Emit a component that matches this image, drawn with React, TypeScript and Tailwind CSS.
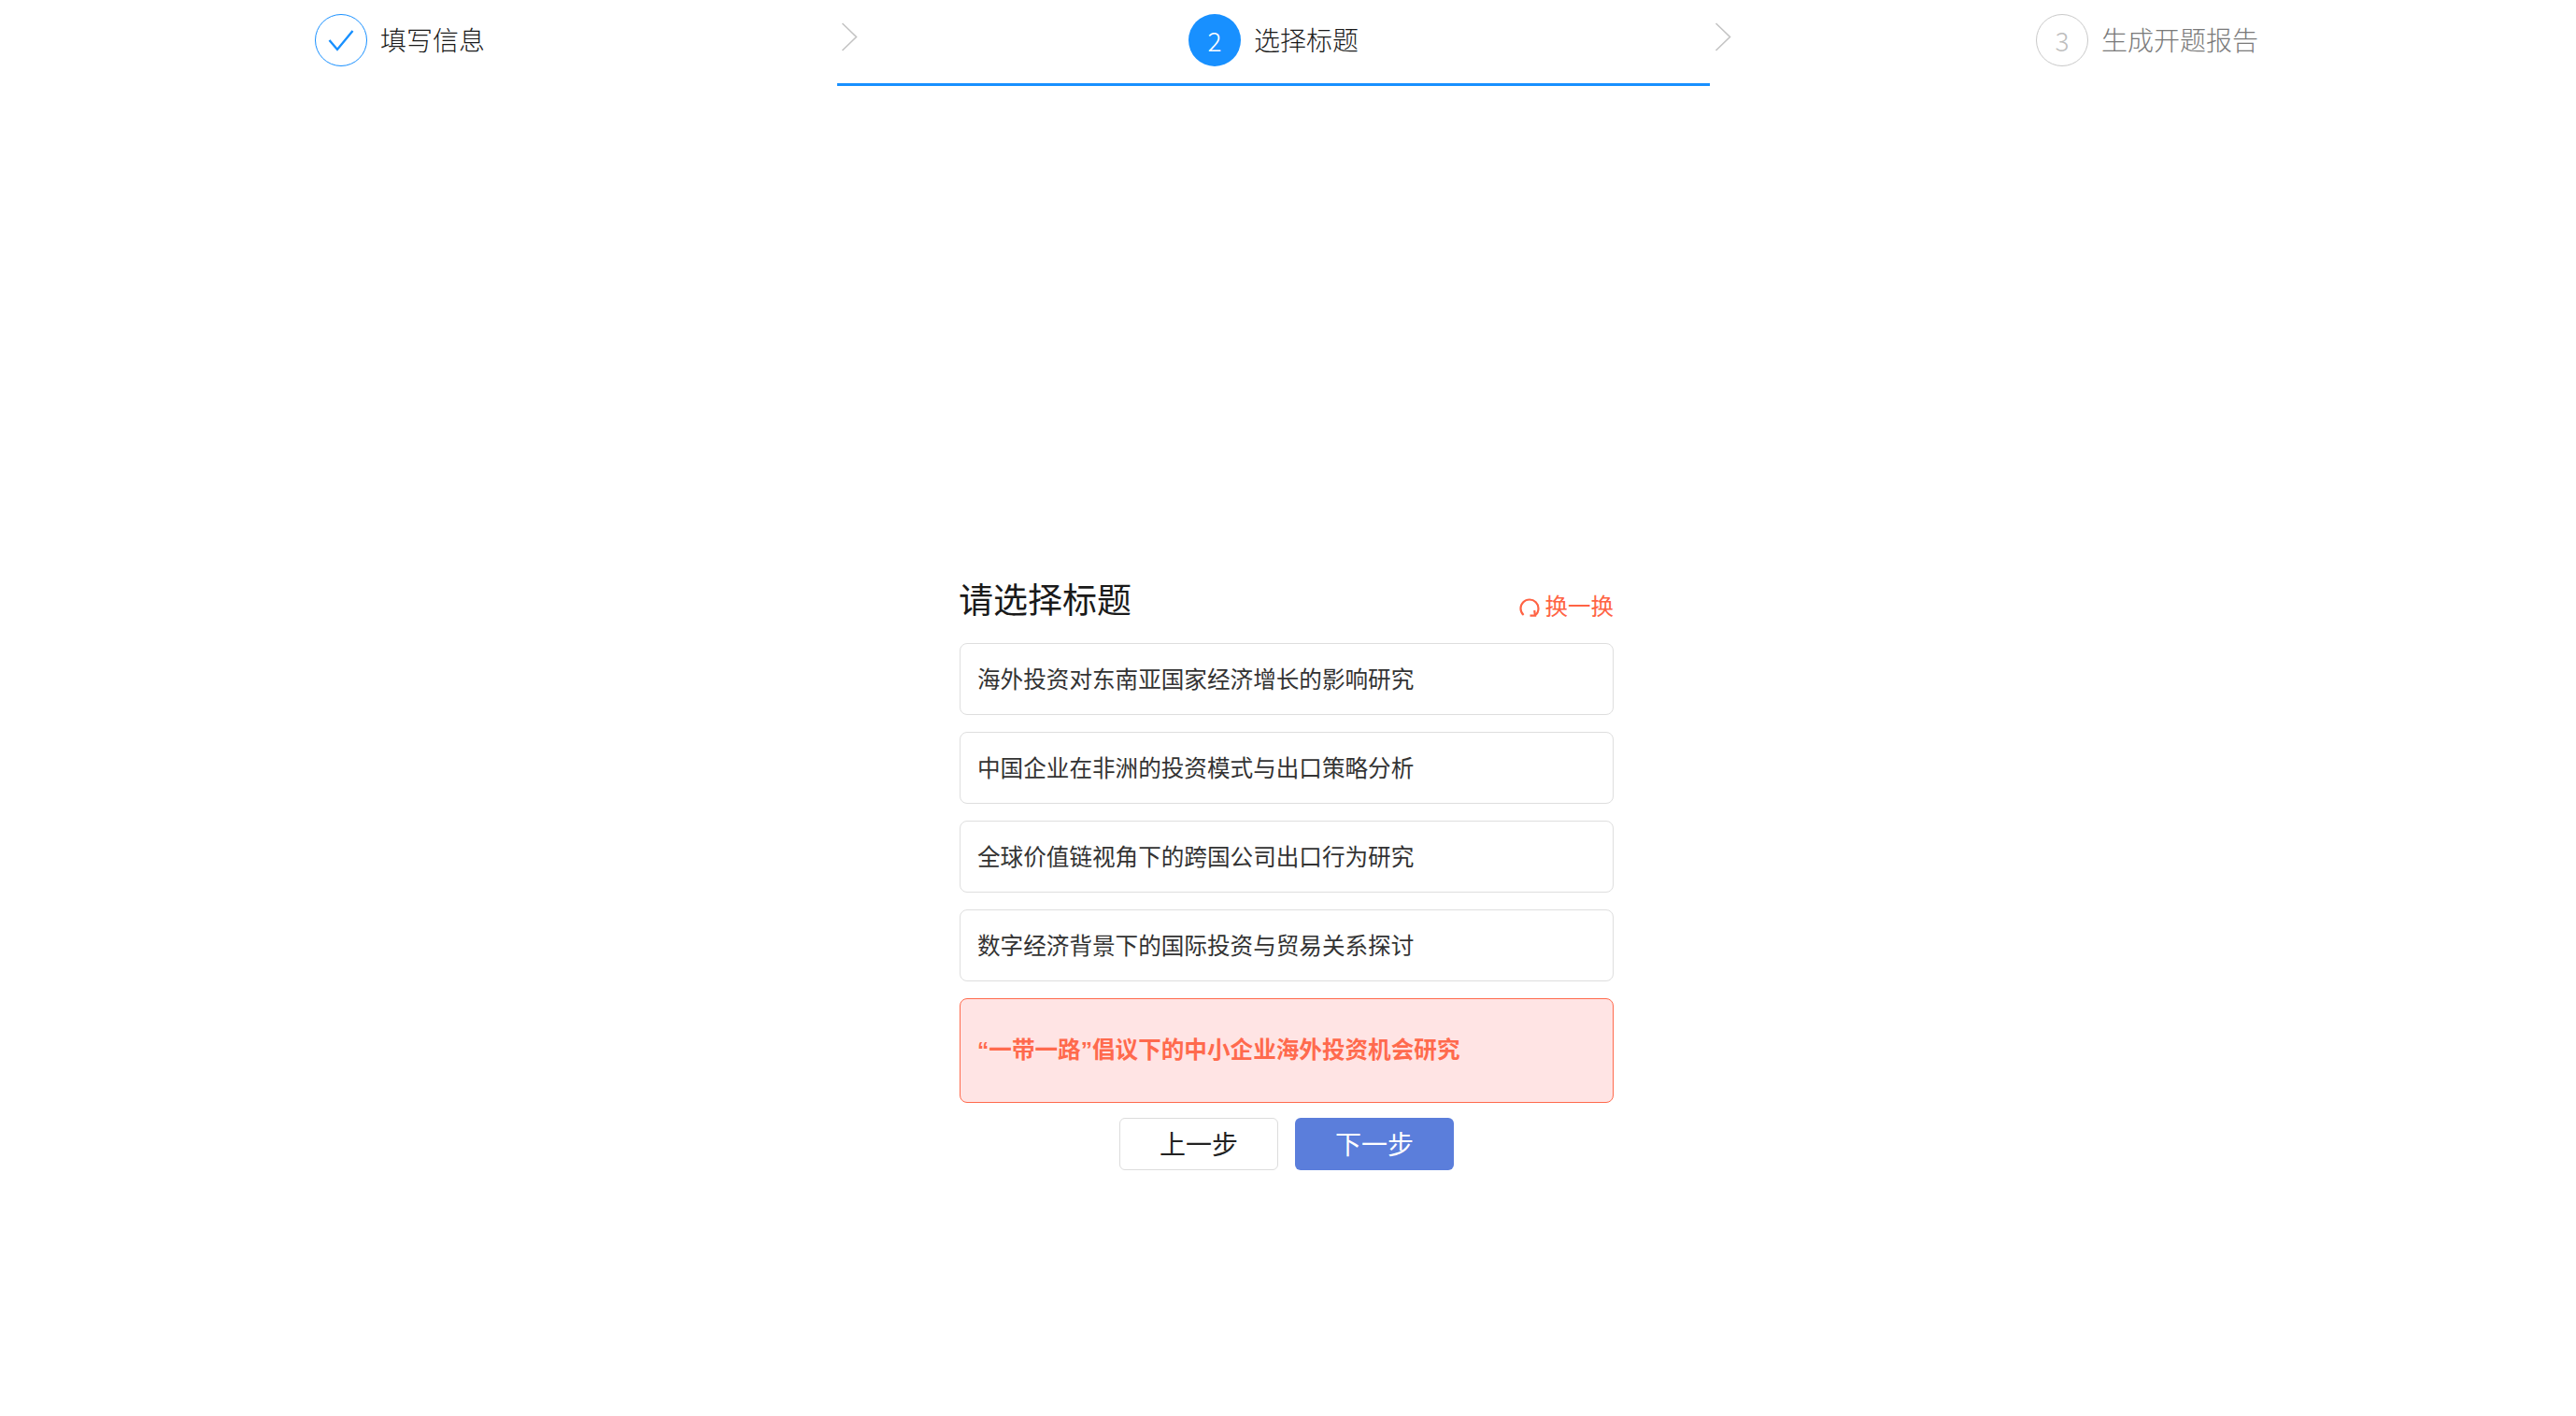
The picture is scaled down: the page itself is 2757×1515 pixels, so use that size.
import React from "react";

const font = { fontFamily: '"Noto Sans CJK SC", "Noto Sans", sans-serif' };

function Chevron({ right }: { right: string }) {
  return (
    <svg width="18" height="32" viewBox="0 0 18 32" fill="none" className={right}>
      <path d="M1.5 1 L16.5 15.5 L1.5 30" stroke="#c4c4c4" strokeWidth="1.6" />
    </svg>
  );
}

const titles = [
  "海外投资对东南亚国家经济增长的影响研究",
  "中国企业在非洲的投资模式与出口策略分析",
  "全球价值链视角下的跨国公司出口行为研究",
  "数字经济背景下的国际投资与贸易关系探讨",
];

export default function App() {
  return (
    <div className="w-[2757px] h-[1515px] bg-white overflow-hidden" style={font}>
      <div className="flex h-[92px]">
        <div className="relative w-[896px] pl-[337px] pt-[15px] flex items-start">
          <div className="w-[56px] h-[56px] rounded-full border border-[#1890ff] flex items-center justify-center">
            <svg width="28" height="24" viewBox="0 0 28 24" fill="none">
              <path d="M1.5 12 L10 22 L26.5 2" stroke="#1890ff" strokeWidth="2.4" />
            </svg>
          </div>
          <span className="ml-[14px] text-[28px] leading-[54px] text-[#1a1a1a] font-light">填写信息</span>
          <Chevron right="absolute right-[-22px] top-[24px]" />
        </div>
        <div className="relative w-[934px] pt-[15px] flex items-start justify-center border-b-[3px] border-[#1890ff]">
          <div className="w-[56px] h-[56px] rounded-full bg-[#1890ff] flex items-center justify-center text-white text-[28px] font-light">2</div>
          <span className="ml-[14px] text-[28px] leading-[54px] text-[#1a1a1a] font-light">选择标题</span>
          <Chevron right="absolute right-[-23px] top-[24px]" />
        </div>
        <div className="flex-1 pl-[349px] pt-[15px] flex items-start">
          <div className="w-[56px] h-[56px] rounded-full border border-[#c9c9c9] flex items-center justify-center text-[#bdbdbd] text-[28px] font-light">3</div>
          <span className="ml-[14px] text-[28px] leading-[54px] text-[#7a7a7a] font-light">生成开题报告</span>
        </div>
      </div>

      <div className="w-[700px] ml-[1027px] mt-[521px]">
        <div className="flex items-start justify-between h-[75px]">
          <h1 className="text-[37px] leading-[54px] text-[#1a1a1a] font-normal -ml-px">请选择标题</h1>
          <div className="flex items-center mt-[17px] text-[24.5px] leading-[36px] text-[#ff6344] font-normal">
            <svg width="22" height="24" viewBox="0 0 22 24" fill="none" className="mr-[6px] mt-[3px] -ml-[2px]">
              <path d="M4.6 20 C2.6 18.3 1.5 15.8 1.5 13 C1.5 7.8 5.8 3.5 11 3.5 C16.2 3.5 20.5 7.8 20.5 13 C20.5 16 19.2 18.6 17 20.3" stroke="#ff6344" strokeWidth="2.2" />
              <path d="M11.5 20.6 L17 20.6 L16.2 15" stroke="#ff6344" strokeWidth="2.2" />
            </svg>
            换一换
          </div>
        </div>

        <div className="flex flex-col gap-[18px]">
          {titles.map((t) => (
            <div key={t} className="h-[77px] rounded-[8px] border border-[#dedede] pl-[18px] pb-[3px] flex items-center text-[24.6px] text-[#333333] font-normal whitespace-nowrap">
              {t}
            </div>
          ))}
          <div className="h-[112px] rounded-[8px] border border-[#ff6a4d] bg-[#ffe4e4] pl-[18px] pb-[2px] flex items-center text-[24.6px] text-[#ff6a4d] font-bold whitespace-nowrap">
            <span>
              <span className="font-['Liberation_Sans']">“</span>一带一路<span className="font-['Liberation_Sans']">”</span>倡议下的中小企业海外投资机会研究
            </span>
          </div>
        </div>

        <div className="flex justify-center gap-[18px] mt-[17px] -translate-y-px">
          <button className="w-[170px] h-[56px] rounded-[6px] border border-[#dcdcdc] bg-white pb-[2px] text-[28px] text-[#222222] font-normal">上一步</button>
          <button className="w-[170px] h-[56px] rounded-[6px] bg-[#5b7edb] pb-[2px] text-[28px] text-white font-normal">下一步</button>
        </div>
      </div>
    </div>
  );
}
